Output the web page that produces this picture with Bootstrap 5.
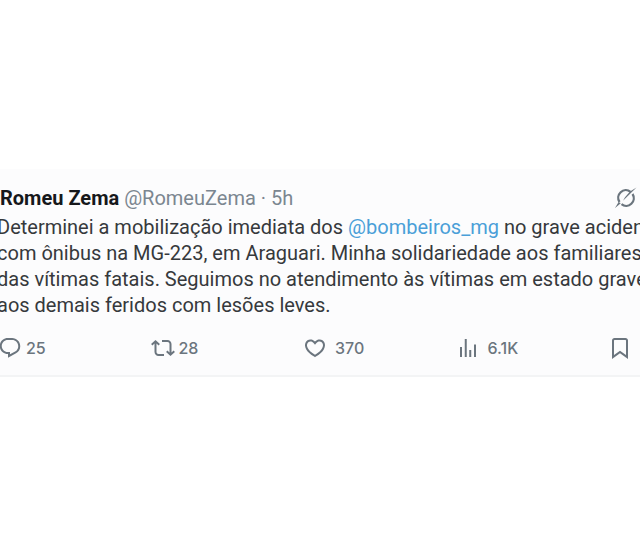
<!DOCTYPE html>
<html lang="pt-BR">
<head>
<meta charset="utf-8">
<meta name="viewport" content="width=device-width, initial-scale=1">
<title>Romeu Zema</title>
<link href="https://cdn.jsdelivr.net/npm/bootstrap@5.3.0/dist/css/bootstrap.min.css" rel="stylesheet">
<style>
body{background:#fff;font-family:Roboto,"Liberation Sans",sans-serif;overflow-x:hidden}
.post{background:#fcfcfd;border-bottom:2px solid #f3f4f5;margin-top:169px;padding:16px 0 15px;color:#36393c}
.post-head{font-size:20px;line-height:26px;padding-right:2px}
.author{color:#16181b}
.muted-ink{color:#7b8690}
.post-text{font-size:20px;line-height:26px;margin:3px 0 0 -3px;white-space:nowrap}
.mention{color:#4a9fd8}
.post-actions{margin:18px 8px 0 -2px}
.act{color:#6b757e;font-family:Inter,sans-serif;font-size:16px;font-weight:500;line-height:24px;background:none;border:0;padding:0}
.act svg{width:24px;height:24px;fill:currentColor;flex:none}
</style>
</head>
<body>
<main>
<article class="post">
<header class="post-head d-flex justify-content-between align-items-center">
<div><a href="#" class="author fw-bold text-decoration-none">Romeu Zema</a> <a href="#" class="muted-ink text-decoration-none">@RomeuZema</a> <span class="muted-ink">· 5h</span></div>
<button class="act d-flex" type="button" aria-label="Grok"><svg viewBox="0 0 24 24"><path d="M16.500 5.800A7.600 7.600 0 0 0 5.500 16M7.500 18.200A7.600 7.600 0 0 0 18.500 8" fill="none" stroke="currentColor" stroke-width="2.300"/><path d="M1 22l3.600-6 2.200 1.200zM22.500 1.500L9 14.800l2-3.600 5-5.600z"/></svg></button>
</header>
<p class="post-text">Determinei a mobilização imediata dos <a href="#" class="mention text-decoration-none">@bombeiros_mg</a> no grave aciden<br>com ônibus na MG-223, em Araguari. Minha solidariedade aos familiares<br>das vítimas fatais. Seguimos no atendimento às vítimas em estado grave<br>aos demais feridos com lesões leves.</p>
<div class="post-actions d-flex">
<div class="flex-fill w-25"><button class="act d-flex gap-1" type="button"><svg viewBox="0 0 24 24"><path d="M1.751 10c0-4.420 3.584-8 8.005-8h4.366c4.490 0 8.129 3.640 8.129 8.130 0 2.960-1.607 5.680-4.196 7.110l-8.054 4.460v-3.690h-.067c-4.490.1-8.183-3.510-8.183-8.010zm8.005-6c-3.317 0-6.005 2.690-6.005 6 0 3.370 2.770 6.080 6.138 6.010l.351-.01h1.761v2.300l5.087-2.810c1.951-1.080 3.163-3.130 3.163-5.360 0-3.390-2.744-6.130-6.129-6.130H9.756z"/></svg><span>25</span></button></div>
<div class="flex-fill w-25"><button class="act d-flex gap-1" type="button"><svg viewBox="0 0 24 24"><path d="M4.500 3.880l4.432 4.140-1.364 1.460L5.500 7.550V16c0 1.100.896 2 2 2H13v2H7.500c-2.209 0-4-1.790-4-4V7.550L1.432 9.480.068 8.020 4.500 3.880zM16.500 6H11V4h5.500c2.209 0 4 1.790 4 4v8.450l2.068-1.930 1.364 1.460-4.432 4.140-4.432-4.140 1.364-1.460 2.068 1.930V8c0-1.100-.896-2-2-2z"/></svg><span>28</span></button></div>
<div class="flex-fill w-25"><button class="act d-flex gap-2" type="button"><svg viewBox="0 0 24 24"><path d="M16.697 5.500c-1.222-.06-2.679.51-3.890 2.160l-.805 1.090-.806-1.090C9.984 6.010 8.526 5.440 7.304 5.500c-1.243.07-2.349.78-2.910 1.910-.552 1.120-.633 2.780.479 4.820 1.074 1.970 3.257 4.270 7.129 6.610 3.870-2.340 6.052-4.640 7.126-6.610 1.111-2.040 1.030-3.700.477-4.820-.561-1.130-1.666-1.840-2.908-1.910zm4.187 7.690c-1.351 2.480-4.001 5.120-8.379 7.670l-.503.3-.504-.3c-4.379-2.550-7.029-5.190-8.382-7.670-1.360-2.500-1.410-4.860-.514-6.670.887-1.790 2.647-2.910 4.601-3.010 1.651-.09 3.368.56 4.798 2.010 1.429-1.450 3.146-2.100 4.796-2.010 1.954.1 3.714 1.220 4.601 3.010.896 1.810.846 4.170-.514 6.670z"/></svg><span>370</span></button></div>
<div class="flex-fill w-25"><button class="act d-flex gap-2" type="button"><svg viewBox="0 0 24 24"><path d="M8.750 21V3h2v18h-2zM18 21V8.500h2V21h-2zM4 21l.004-10h2L6 21H4zm9.248 0v-7h2v7h-2z"/></svg><span>6.1K</span></button></div>
<button class="act d-flex" type="button" aria-label="Salvar"><svg viewBox="0 0 24 24"><path d="M4 4.500C4 3.120 5.119 2 6.500 2h11C18.881 2 20 3.120 20 4.500v18.440l-8-5.710-8 5.710V4.500zM6.500 4c-.276 0-.5.22-.5.5v14.560l6-4.290 6 4.290V4.500c0-.28-.224-.5-.5-.5h-11z"/></svg></button>
</div>
</article>
</main>
<script src="https://cdn.jsdelivr.net/npm/bootstrap@5.3.0/dist/js/bootstrap.bundle.min.js"></script>
</body>
</html>
